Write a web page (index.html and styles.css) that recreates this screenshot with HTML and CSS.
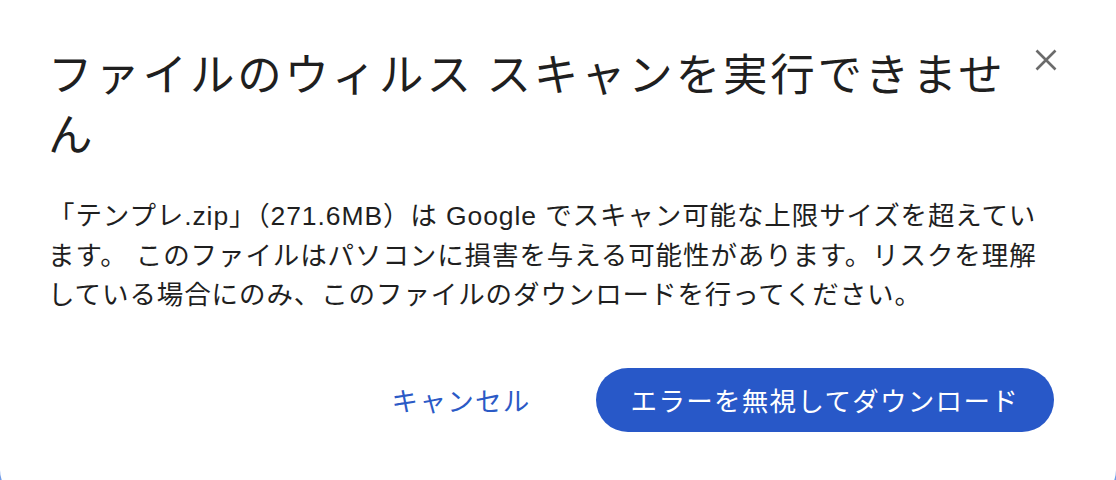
FILE: index.html
```html
<!DOCTYPE html>
<html lang="ja">
<head>
<meta charset="utf-8">
<link rel="stylesheet" href="styles.css">
<title>ダウンロード</title>
</head>
<body>
<div class="dialog">
  <div class="header">
    <h1 class="title">ファイルのウィルス スキャンを実行できませ<br>ん</h1>
    <button class="close" aria-label="閉じる">
      <svg viewBox="0 0 24 24" width="24" height="24"><path d="M2.5 2.5 L21.5 21.5 M21.5 2.5 L2.5 21.5" stroke="#6b6b6b" stroke-width="2.6" fill="none"/></svg>
    </button>
  </div>
  <p class="message">「テンプレ.zip」（271.6MB）は Google でスキャン可能な上限サイズを超えてい<br>ます。 このファイルはパソコンに損害を与える可能性があります。リスクを理解<br>している場合にのみ、このファイルのダウンロードを行ってください。</p>
  <div class="actions">
    <button class="btn cancel">キャンセル</button>
    <button class="btn primary">エラーを無視してダウンロード</button>
  </div>
</div>
</body>
</html>
```

FILE: styles.css
```css
html, body {
  margin: 0;
  padding: 0;
}
body {
  background: #6f9be8;
  width: 1116px;
  height: 480px;
  overflow: hidden;
  font-family: "Liberation Sans", "Noto Sans CJK JP", sans-serif;
  color: #1f1f1f;
}
.dialog {
  background: #ffffff;
  width: 1116px;
  height: 500px;
  box-sizing: border-box;
  border-radius: 0 0 30px 30px;
  padding: 42px 62px 0 48px;
}
.header {
  display: flex;
  align-items: flex-start;
}
.title {
  flex: 1;
  margin: 0;
  font-family: "Noto Sans CJK JP", sans-serif;
  font-weight: 400;
  font-size: 44.5px;
  line-height: 60px;
  letter-spacing: 2.8px;
  color: #1f1f1f;
}
.close {
  width: 40px;
  height: 40px;
  margin: -2px -12px 0 0;
  border: none;
  background: transparent;
  padding: 0;
  display: flex;
  align-items: center;
  justify-content: center;
}
.message {
  margin: 35px 0 0 0;
  font-size: 26.5px;
  line-height: 39.5px;
  letter-spacing: 0.9px;
  color: #1f1f1f;
  white-space: nowrap;
}
.actions {
  display: flex;
  justify-content: flex-end;
  align-items: center;
  gap: 41px;
  margin-top: 52px;
}
.btn {
  font-family: "Noto Sans CJK JP", sans-serif;
  font-size: 26.5px;
  letter-spacing: 1.3px;
  height: 64px;
  border: none;
  border-radius: 32px;
  padding: 0 24px;
  cursor: pointer;
}
.cancel {
  background: transparent;
  color: #2b5ac6;
}
.primary {
  background: #2858c8;
  color: #ffffff;
  padding: 0 35px 0 35px;
}
```
